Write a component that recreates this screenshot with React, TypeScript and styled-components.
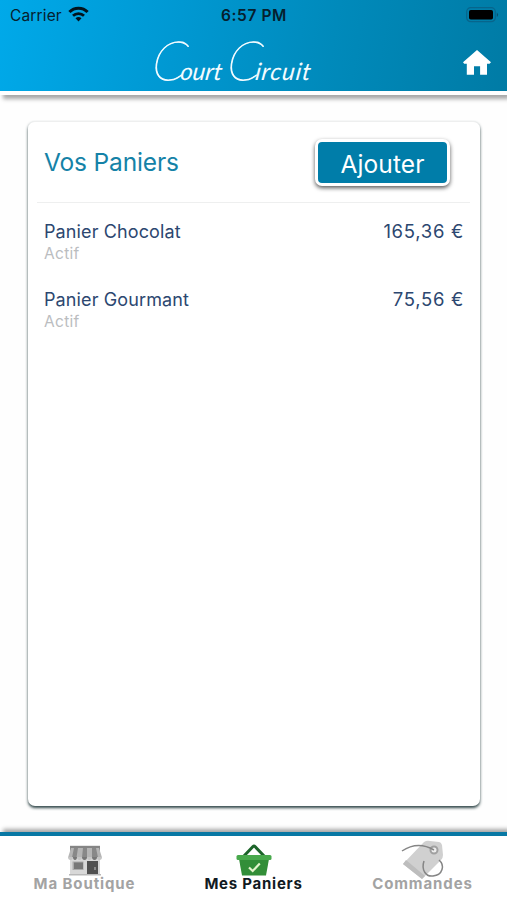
import React from 'react';
import styled, { createGlobalStyle } from 'styled-components';

const GlobalStyle = createGlobalStyle`
  * { box-sizing: border-box; }
  body { margin: 0; background: #fefefe; font-family: Inter, sans-serif; }
  svg { display: block; }
`;

const Screen = styled.div`
  display: flex;
  flex-direction: column;
  height: 900px;
  width: 507px;
  overflow: hidden;
`;

const Header = styled.header`
  height: 95px;
  flex: none;
  border-bottom: 4px solid #fff;
  background: linear-gradient(100deg, #00a9e9 0%, #0098d2 35%, #008abb 65%, #007ba5 100%);
  background-clip: padding-box;
  box-shadow: 3px 4px 4px rgba(0, 0, 0, 0.34);
`;

const StatusBar = styled.div`
  height: 29px;
  display: grid;
  grid-template-columns: 1fr auto 1fr;
  align-items: center;
  padding: 1px 8px 0 10px;
  color: #06202e;
`;

const Carrier = styled.div`
  display: flex;
  align-items: center;
  gap: 6px;
  font-size: 15.5px;
  letter-spacing: 0.15px;

  svg {
    margin-top: -2px;
  }
`;

const Clock = styled.div`
  font-size: 15.5px;
  font-weight: 600;
  letter-spacing: 0.6px;
  margin-right: 1px;
`;

const Battery = styled.div`
  justify-self: end;
  margin-top: -1px;
`;

const NavBar = styled.div`
  height: 62px;
  display: grid;
  grid-template-columns: 1fr 169px 1fr;
  align-items: center;
  padding: 0 15px 0 0;
`;

const Wordmark = styled.div`
  grid-column: 2;
  display: flex;
  height: 50px;
  margin-left: -9px;
  color: #f2fbff;
`;

const Word = styled.span<{ $width: number; $tracking: number }>`
  width: ${(p) => p.$width}px;
  flex: none;
  display: flex;
  align-items: baseline;
  white-space: nowrap;
  font: italic 400 24px/50px Lato, sans-serif;
  letter-spacing: ${(p) => p.$tracking}px;
  transform: skewX(-8deg);
`;

const Initial = styled.span`
  font-size: 54px;
  font-weight: 100;
  line-height: 50px;
  letter-spacing: -5px;
  -webkit-text-stroke: 0.9px #f2fbff;
`;

const HomeButton = styled.button`
  grid-column: 3;
  justify-self: end;
  padding: 0;
  border: 0;
  background: none;
  margin-top: 5px;
`;

const Main = styled.main`
  flex: 1;
  padding: 26px 27px 25px 28px;
  display: flex;
`;

const Card = styled.section`
  flex: 1;
  height: 685px;
  border-radius: 7px;
  background: #fff;
  border-top: 1px solid #eeefef;
  box-shadow: 0 2px 3px rgba(20, 45, 48, 0.88);
`;

const CardHeader = styled.div`
  height: 81px;
  margin: 0 10px 0 9px;
  padding: 0 20px 0 7px;
  display: flex;
  align-items: center;
  justify-content: space-between;
  border-bottom: 1px solid #eeefef;
`;

const Title = styled.h1`
  margin: 0;
  color: #1582a7;
  font-size: 24.5px;
  font-weight: 400;
  letter-spacing: -0.15px;
  white-space: nowrap;
`;

const AddButton = styled.button`
  width: 135px;
  height: 47px;
  padding: 3px 0 0;
  border: 3px solid #fff;
  border-radius: 7px;
  color: #fff;
  background: #007da9;
  font: 400 24.5px Inter, sans-serif;
  letter-spacing: 0.1px;
  box-shadow: 0 2px 4px rgba(0, 0, 0, 0.65);
`;

const List = styled.ul`
  list-style: none;
  margin: 0;
  padding: 17px 16px 0 16px;
`;

const Item = styled.li`
  display: flex;
  justify-content: space-between;
  height: 67.5px;
  color: #2c4770;
  font-size: 18px;
  line-height: 23px;
  letter-spacing: 0.12px;
`;

const Status = styled.div`
  color: #bbbdbf;
  font-size: 15.5px;
  line-height: 21px;
  letter-spacing: 0.3px;
`;

const Price = styled.div`
  font-size: 18.5px;
  letter-spacing: 0.7px;
`;

const TabBar = styled.nav`
  flex: none;
  height: 68px;
  border-top: 4px solid #0878a4;
  background: #fff;
  display: grid;
  grid-template-columns: repeat(3, 1fr);
  box-shadow: 3px -3px 4px rgba(0, 0, 0, 0.35);
`;

const Tab = styled.a<{ $active?: boolean }>`
  display: flex;
  flex-direction: column;
  align-items: center;
  color: ${(p) => (p.$active ? '#111a22' : '#a3a3a3')};
  font-size: 15px;
  font-weight: 700;
  letter-spacing: ${(p) => (p.$active ? 0.75 : 0.9)}px;
  line-height: 18px;
  white-space: nowrap;
`;

const TabIcon = styled.div`
  height: 39px;
  padding-top: 2px;
  display: flex;
  justify-content: center;
`;

const WifiIcon = () => (
  <svg width="21" height="16" viewBox="0 0 21 16" fill="none" stroke="#03141d">
    <path d="M1.4 6C6.3.9 14.7.9 19.6 6" strokeWidth="3" />
    <path d="M5 9.8c3-3 8-3 11 0" strokeWidth="2.7" />
    <path d="M7.5 12.2Q10.5 9.7 13.5 12.2L10.5 15.4Z" fill="#03141d" stroke="none" />
  </svg>
);

const BatteryIcon = () => (
  <svg width="33" height="16" viewBox="0 0 33 16">
    <rect x=".7" y=".7" width="28.6" height="14" rx="4" fill="none" stroke="#07658c" strokeWidth="1.2" />
    <rect x="3" y="3" width="24" height="9.5" rx="1.8" fill="#000" />
    <path d="M30.8 5.5q2.6 2.3 0 4.6z" fill="#07506f" />
  </svg>
);

const HomeIcon = () => (
  <svg width="30" height="26" viewBox="0 0 30 26" fill="#fff">
    <path d="M15 0 29 12.2 27.5 13.7H25V24.8H18.1V16.2H12V24.8H4.8V13.7H2.2L1 12.2Z" />
  </svg>
);

const ShopIcon = () => (
  <svg width="36" height="39" viewBox="0 0 36 39">
    <path d="M3 19H33V37H3Z" fill="#d8d8d8" />
    <path d="M3 7.8H33V13H3Z" fill="#858585" />
    <path d="M4 10H32L35 19.5H1Z" fill="#b5b5b5" />
    <path d="M7 10H11L9.5 19.5H5Z M16 10H20V19.5H15Z M25 10H29L31 19.5H25Z" fill="#888" />
    <path d="M1 19h5q0 3-2.5 3T1 19Z M10 19h5q0 3-2.5 3T10 19Z M20 19h5q0 3-2.5 3T20 19Z M30 19h5q0 3-2.5 3T30 19Z" fill="#c5c5c5" />
    <path d="M6 19h4q0 3-2 3t-2-3 M15 19h5q0 3-2.5 3T15 19 M25 19h5q0 3-2.5 3T25 19" fill="#777" />
    <path d="M5.5 23.5H16.5V32H5.5Z" fill="#aaa" />
    <path d="M7 24.5H16V31H7Z" fill="#777" />
    <path d="M20 23H31V37H20Z" fill="#505050" />
    <path d="M28 29V32" stroke="#c0c0c0" />
    <path d="M2 36H34V37.5H2Z" fill="#b9b9b9" />
  </svg>
);

const BasketIcon = () => (
  <svg width="36" height="39" viewBox="0 0 36 39">
    <path d="M7 19 17 8.5Q18 7.5 19 8.5L29 19" fill="none" stroke="#1c6429" strokeWidth="3" />
    <path d="M3 21H33L30 37.5H6Z" fill="#328e38" />
    <rect x=".5" y="17" width="35" height="5" rx="1.5" fill="#48a94c" />
    <path d="M13 29.5 16.7 33 23.8 25.5" fill="none" stroke="#e5f5cd" strokeWidth="2.2" />
  </svg>
);

const TagIcon = () => (
  <svg width="44" height="42" viewBox="0 0 44 42">
    <path d="M23 4Q26 2 29 3L38 4Q40 4 41 7L42 17Q42 20 40 22L21 41L2 26Z" fill="#d0d0d0" />
    <path d="M2 26 21 41 24 38 5 22Z" fill="#bdbdbd" />
    <circle cx="33" cy="12" r="3.5" fill="#eee" stroke="#a0a0a0" strokeWidth="2" />
    <path d="M1 13C10 7 21 5 33 12M23 23C20 32 25 39 32 38C42 37 44 27 38 22" fill="none" stroke="#858585" strokeWidth="1.5" />
  </svg>
);

const baskets = [
  { name: 'Panier Chocolat', status: 'Actif', price: '165,36 €' },
  { name: 'Panier Gourmant', status: 'Actif', price: '75,56 €' },
];

export default function App() {
  return (
    <Screen>
      <GlobalStyle />
      <Header>
        <StatusBar>
          <Carrier>Carrier<WifiIcon /></Carrier>
          <Clock>6:57 PM</Clock>
          <Battery><BatteryIcon /></Battery>
        </StatusBar>
        <NavBar>
          <Wordmark>
            <Word $width={75} $tracking={0}><Initial>C</Initial>ourt</Word>
            <Word $width={88} $tracking={0.9}><Initial>C</Initial>ircuit</Word>
          </Wordmark>
          <HomeButton aria-label="Accueil"><HomeIcon /></HomeButton>
        </NavBar>
      </Header>
      <Main>
        <Card>
          <CardHeader>
            <Title>Vos Paniers</Title>
            <AddButton>Ajouter</AddButton>
          </CardHeader>
          <List>
            {baskets.map((b) => (
              <Item key={b.name}>
                <div>{b.name}<Status>{b.status}</Status></div>
                <Price>{b.price}</Price>
              </Item>
            ))}
          </List>
        </Card>
      </Main>
      <TabBar>
        <Tab><TabIcon><ShopIcon /></TabIcon>Ma Boutique</Tab>
        <Tab $active><TabIcon><BasketIcon /></TabIcon>Mes Paniers</Tab>
        <Tab><TabIcon><TagIcon /></TabIcon>Commandes</Tab>
      </TabBar>
    </Screen>
  );
}
